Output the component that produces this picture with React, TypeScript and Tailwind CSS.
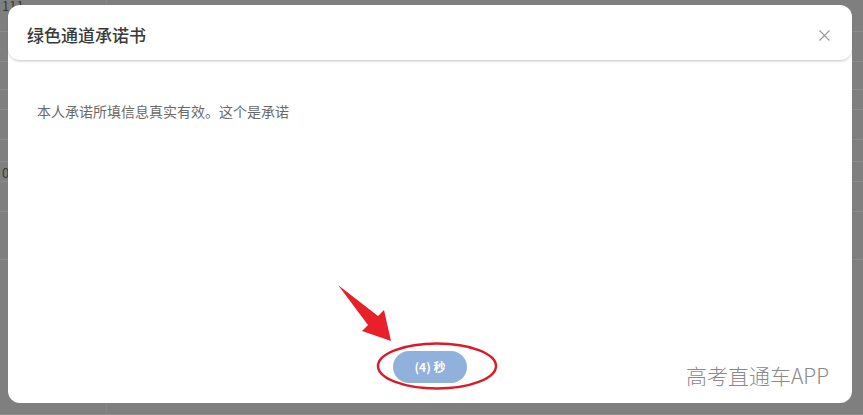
import React from "react";

const rows = [32, 30, 28, 20, 30, 22, 20, 30, 48, 155];

export default function App() {
  return (
    <div
      className="relative w-[863px] h-[415px] overflow-hidden bg-[#7f7f7f]"
      style={{ fontFamily: '"Noto Sans CJK SC", "Noto Sans", sans-serif' }}
    >
      {/* background table behind the mask */}
      <div className="flex flex-col">
        {rows.map((h, i) => (
          <div
            key={i}
            className="flex border-b border-[#8c8c8c] text-[13px] text-[#3a3a3a]"
            style={{ height: h }}
          >
            <div
              className={
                i === 0
                  ? "w-[107px] border-r border-[#878787] pl-[2px] leading-[12px]"
                  : "w-[107px] border-r border-[#878787] pl-[2px] pt-[4px] leading-[14px]"
              }
            >
              {i === 0 ? "111" : i === 6 ? "0" : ""}
            </div>
          </div>
        ))}
      </div>

      {/* modal */}
      <div className="absolute left-[8px] top-[5px] w-[844px] h-[398px] rounded-[12px] bg-white flex flex-col">
        <div className="h-[56px] shrink-0 flex items-center justify-between pl-[19px] pr-[22px] pt-[5px] border-b border-[#d6d6d6] rounded-[12px] shadow-[0_1px_2px_rgba(0,0,0,0.12)]">
          <span className="text-[17px] font-medium text-[#3a3a3a]">绿色通道承诺书</span>
          <svg width="11" height="11" viewBox="0 0 11 11" className="text-[#9a9a9a]">
            <path d="M0.5 0.5 L10.5 10.5 M10.5 0.5 L0.5 10.5" stroke="currentColor" strokeWidth="1.2" />
          </svg>
        </div>
        <div className="flex-1 flex flex-col px-[29px] pt-[40px] pb-[20px]">
          <p className="text-[14px] leading-[20px] text-[#6a6a6a]">本人承诺所填信息真实有效。这个是承诺</p>
          <div className="flex-1" />
          <div className="flex justify-center">
            <button className="w-[74px] h-[32px] rounded-full bg-[#90b1db] text-white text-[12px] font-bold">
              (4) 秒
            </button>
          </div>
        </div>
      </div>

      {/* annotation overlay */}
      <svg className="absolute left-0 top-0 pointer-events-none" width="863" height="415">
        <polygon
          points="338,285 378,316 384,310 391,341 362,331 368,325"
          fill="#e8202a"
        />
        <ellipse cx="437" cy="366" rx="59" ry="22.5" fill="none" stroke="#d91c28" strokeWidth="2.5" />
      </svg>

      {/* watermark */}
      <div className="absolute left-[686px] top-[361px] text-[21px] font-light leading-[28px] text-[#8a8a8a] [text-shadow:0_0_2px_#fff]">
        高考直通车APP
      </div>
    </div>
  );
}
